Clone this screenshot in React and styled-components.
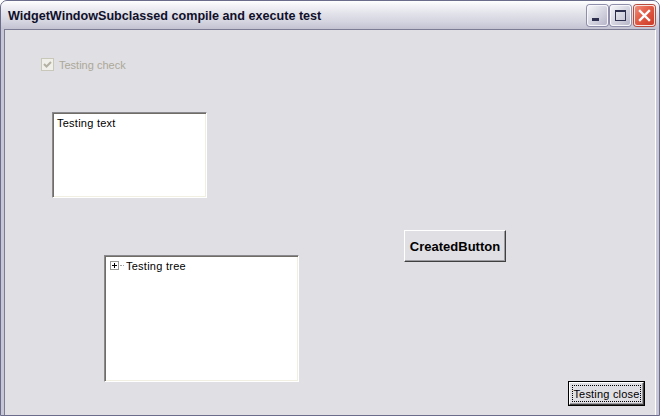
import React from 'react'
import styled, { createGlobalStyle } from 'styled-components'

const Global = createGlobalStyle`
  html, body {
    margin: 0;
    padding: 0;
    background: #ffffff;
  }
  body {
    font-family: "Liberation Sans", Arial, sans-serif;
  }
`

const Window = styled.div`
  width: 660px;
  height: 416px;
  box-sizing: border-box;
  display: flex;
  flex-direction: column;
  background: #c6c6d6;
  border: 1px solid #6b6b8b;
  border-radius: 7px 7px 0 0;
  overflow: hidden;
`

const TitleBar = styled.div`
  height: 28px;
  flex: none;
  display: flex;
  align-items: center;
  padding: 0 4px 0 7px;
  background: linear-gradient(
    to bottom,
    #ffffff 0%,
    #f1f1f6 18%,
    #e2e2ea 45%,
    #d4d4e0 75%,
    #c2c2d2 100%
  );
`

const Title = styled.span`
  font-family: "Liberation Sans", Arial, sans-serif;
  font-weight: 700;
  font-size: 12.6px;
  padding-top: 1px;
  color: #10102a;
`

const CaptionButtons = styled.div`
  margin-left: auto;
  display: flex;
  gap: 2px;
  padding-top: 1px;
`

const CaptionButton = styled.div`
  width: 21px;
  height: 21px;
  box-sizing: border-box;
  border-radius: 3px;
  border: 1px solid ${p => (p.$close ? '#f6e2de' : '#f7f7fb')};
  box-shadow: 0 0 0 1px ${p => (p.$close ? '#b84a3e' : '#8f8fab')};
  background: ${p =>
    p.$close
      ? 'linear-gradient(135deg, #f28c7c 0%, #e25b45 45%, #cc3a26 100%)'
      : 'linear-gradient(135deg, #f4f4f8 0%, #d6d6e2 50%, #b6b6ca 100%)'};
  display: flex;
  align-items: center;
  justify-content: center;
  margin-left: ${p => (p.$close ? '1px' : '0')};
`

const Body = styled.div`
  flex: 1;
  display: flex;
  padding: 0 3px 3px 3px;
`

const Client = styled.div`
  flex: 1;
  display: flex;
  flex-direction: column;
  align-items: flex-start;
  background: #e0dfe3;
  border: 1px solid;
  border-color: #7c7c94 #ffffff #ffffff #7c7c94;
`

const CheckRow = styled.label`
  margin: 28px 0 0 36px;
  display: flex;
  align-items: center;
  height: 13px;
  font-size: 11px;
  color: #aca899;
`

const CheckBox = styled.span`
  width: 13px;
  height: 13px;
  box-sizing: border-box;
  border: 1px solid #c9c7ba;
  background: #f0efea;
  display: flex;
  align-items: center;
  justify-content: center;
  margin-right: 5px;
`

const Sunken = styled.div`
  box-sizing: border-box;
  background: #ffffff;
  border: 1px solid;
  border-color: #8a8a8e #ffffff #ffffff #8a8a8e;
  box-shadow: inset 1px 1px 0 #6f6d66, inset -1px -1px 0 #f1efe2;
  font-size: 11px;
  letter-spacing: 0.25px;
  color: #000000;
`

const TextBox = styled(Sunken)`
  margin: 41px 0 0 47px;
  width: 155px;
  height: 86px;
  padding: 4px 4px;
  line-height: 13px;
`

const MidRow = styled.div`
  margin-top: 32px;
  display: flex;
  align-items: flex-start;
`

const Tree = styled(Sunken)`
  margin: 25px 0 0 99px;
  width: 195px;
  height: 127px;
  padding: 4px 5px;
`

const TreeItem = styled.div`
  display: flex;
  align-items: center;
  height: 11px;
`

const Expander = styled.span`
  width: 9px;
  height: 9px;
  box-sizing: border-box;
  border: 1px solid #9a9a94;
  background: #ffffff;
  display: flex;
  align-items: center;
  justify-content: center;
`

const Connector = styled.span`
  width: 4px;
  margin: 0 2px 0 1px;
  border-top: 1px dotted #a0a0a0;
`

const Button = styled.button`
  box-sizing: border-box;
  margin: 0;
  padding: 0;
  width: ${p => p.$w}px;
  height: ${p => p.$h}px;
  background: #e0dfe3;
  font-family: "Liberation Sans", Arial, sans-serif;
  color: #000000;
  border: 1px solid;
  border-color: #ffffff #404040 #404040 #ffffff;
  box-shadow: inset -1px -1px 0 #9d9da1;
`

const CreatedButton = styled(Button)`
  margin-left: 105px;
  font-size: 13px;
  font-weight: 700;
`

const CloseButton = styled(Button)`
  margin: auto 11px 11px auto;
  font-size: 11px;
  letter-spacing: 0.2px;
  outline: 1px solid #000000;
  outline-offset: 0;
  padding: 2px;
  display: flex;
`

const FocusRect = styled.span`
  flex: 1;
  display: flex;
  align-items: center;
  justify-content: center;
  border: 1px dotted #000000;
`

export default function App() {
  return (
    <>
      <Global />
      <Window>
        <TitleBar>
          <Title>WidgetWindowSubclassed compile and execute test</Title>
          <CaptionButtons>
            <CaptionButton>
              <svg width="19" height="19" viewBox="0 0 19 19">
                <rect x="4" y="12" width="7" height="3" fill="#2e2e4e" />
              </svg>
            </CaptionButton>
            <CaptionButton>
              <svg width="19" height="19" viewBox="0 0 19 19">
                <rect x="4.5" y="4.5" width="10" height="10" fill="none" stroke="#2e2e4e" strokeWidth="1" />
                <rect x="4" y="4" width="11" height="2" fill="#2e2e4e" />
              </svg>
            </CaptionButton>
            <CaptionButton $close>
              <svg width="19" height="19" viewBox="0 0 19 19">
                <path d="M5 5 L14 14 M14 5 L5 14" stroke="#ffffff" strokeWidth="2.4" strokeLinecap="square" />
              </svg>
            </CaptionButton>
          </CaptionButtons>
        </TitleBar>
        <Body>
          <Client>
            <CheckRow>
              <CheckBox>
                <svg width="11" height="11" viewBox="0 0 11 11">
                  <path d="M2 5 L4.5 7.5 L9 3" fill="none" stroke="#b3b1a3" strokeWidth="2" />
                </svg>
              </CheckBox>
              Testing check
            </CheckRow>
            <TextBox>Testing text</TextBox>
            <MidRow>
              <Tree>
                <TreeItem>
                  <Expander>
                    <svg width="7" height="7" viewBox="0 0 7 7">
                      <path d="M1 3.5 H6 M3.5 1 V6" stroke="#000000" strokeWidth="1" />
                    </svg>
                  </Expander>
                  <Connector />
                  Testing tree
                </TreeItem>
              </Tree>
              <CreatedButton $w={102} $h={32}>CreatedButton</CreatedButton>
            </MidRow>
            <CloseButton $w={75} $h={23}>
              <FocusRect>Testing close</FocusRect>
            </CloseButton>
          </Client>
        </Body>
      </Window>
    </>
  )
}
